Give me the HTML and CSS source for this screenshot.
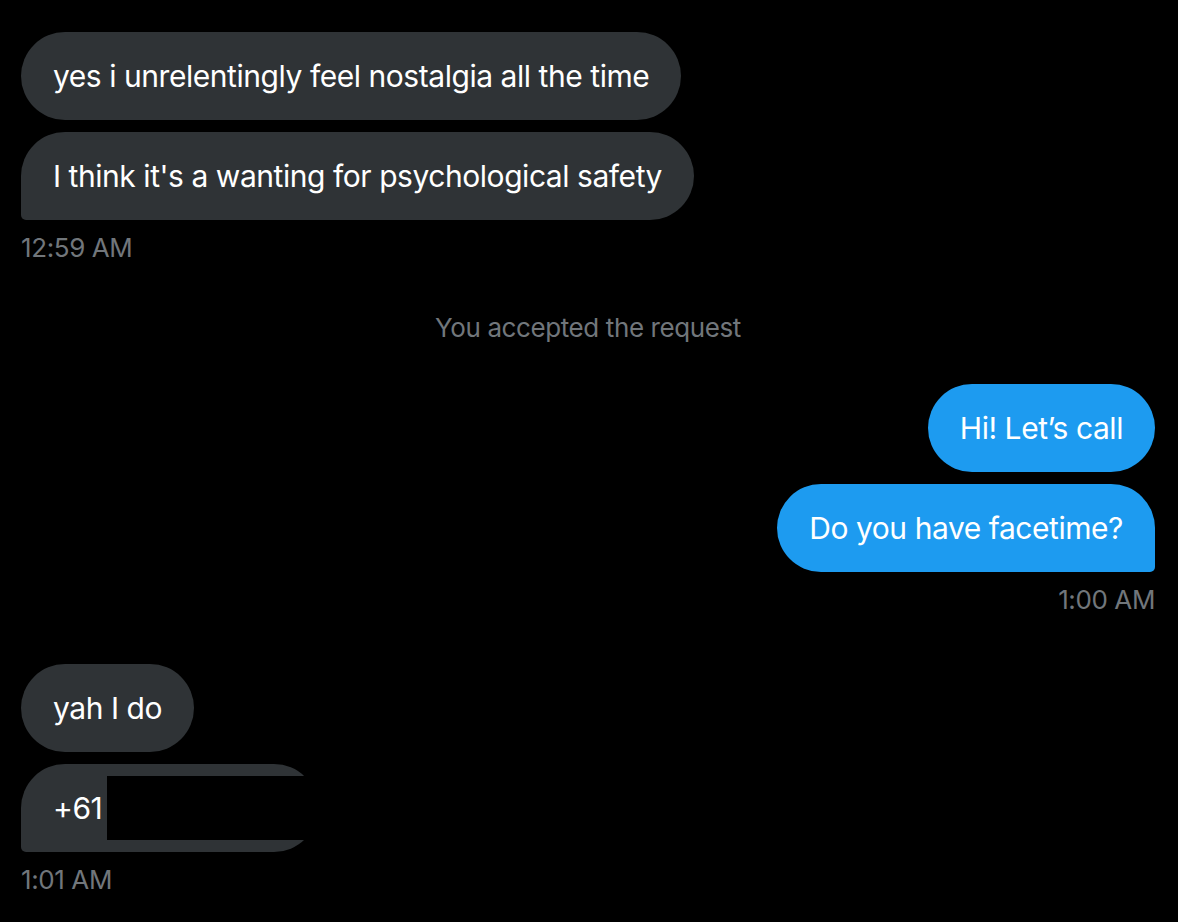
FILE: index.html
```html
<!DOCTYPE html>
<html lang="en">
<head>
<meta charset="utf-8">
<title>Messages</title>
<link rel="stylesheet" href="styles.css">
</head>
<body>
<main class="chat">
  <section class="group in">
    <div class="bubble">yes i unrelentingly feel nostalgia all the time</div>
    <div class="bubble last">I think it's a wanting for psychological safety</div>
    <div class="time">12:59 AM</div>
  </section>

  <div class="notice">You accepted the request</div>

  <section class="group out">
    <div class="bubble">Hi! Let’s call</div>
    <div class="bubble last">Do you have facetime?</div>
    <div class="time">1:00 AM</div>
  </section>

  <section class="group in later">
    <div class="bubble">yah I do</div>
    <div class="bubble last redacted">+61<span class="redaction" aria-hidden="true"></span></div>
    <div class="time">1:01 AM</div>
  </section>
</main>
</body>
</html>
```

FILE: styles.css
```css
html, body {
  margin: 0;
  background: #000;
}

body {
  font-family: "Inter", "Noto Sans", sans-serif;
  color: #fff;
  -webkit-font-smoothing: antialiased;
}

.chat {
  display: flex;
  flex-direction: column;
  padding: 32px 23px 0 21px;
}

.group {
  display: flex;
  flex-direction: column;
  gap: 12px;
}

.group.in {
  align-items: flex-start;
}

.group.out {
  align-items: flex-end;
}

.group.later {
  margin-top: 48px;
}

.bubble {
  font-size: 30px;
  line-height: 40px;
  letter-spacing: -0.45px;
  padding: 24px 32px;
  border-radius: 44px;
  white-space: nowrap;
}

.in .bubble {
  background: #2f3336;
}

.out .bubble {
  background: #1d9bf0;
}

.in .bubble.last {
  border-bottom-left-radius: 5px;
}

.out .bubble.last {
  border-bottom-right-radius: 5px;
}

.bubble.redacted {
  position: relative;
  box-sizing: border-box;
  width: 297px;
}

.redaction {
  position: absolute;
  left: 86px;
  top: 12px;
  width: 240px;
  height: 64px;
  background: #000;
}

.time {
  font-size: 26px;
  line-height: 32px;
  letter-spacing: -0.4px;
  color: #71767b;
}

.notice {
  margin: 48px 0 40px;
  text-align: center;
  font-size: 26px;
  line-height: 32px;
  letter-spacing: -0.4px;
  color: #71767b;
}
```
